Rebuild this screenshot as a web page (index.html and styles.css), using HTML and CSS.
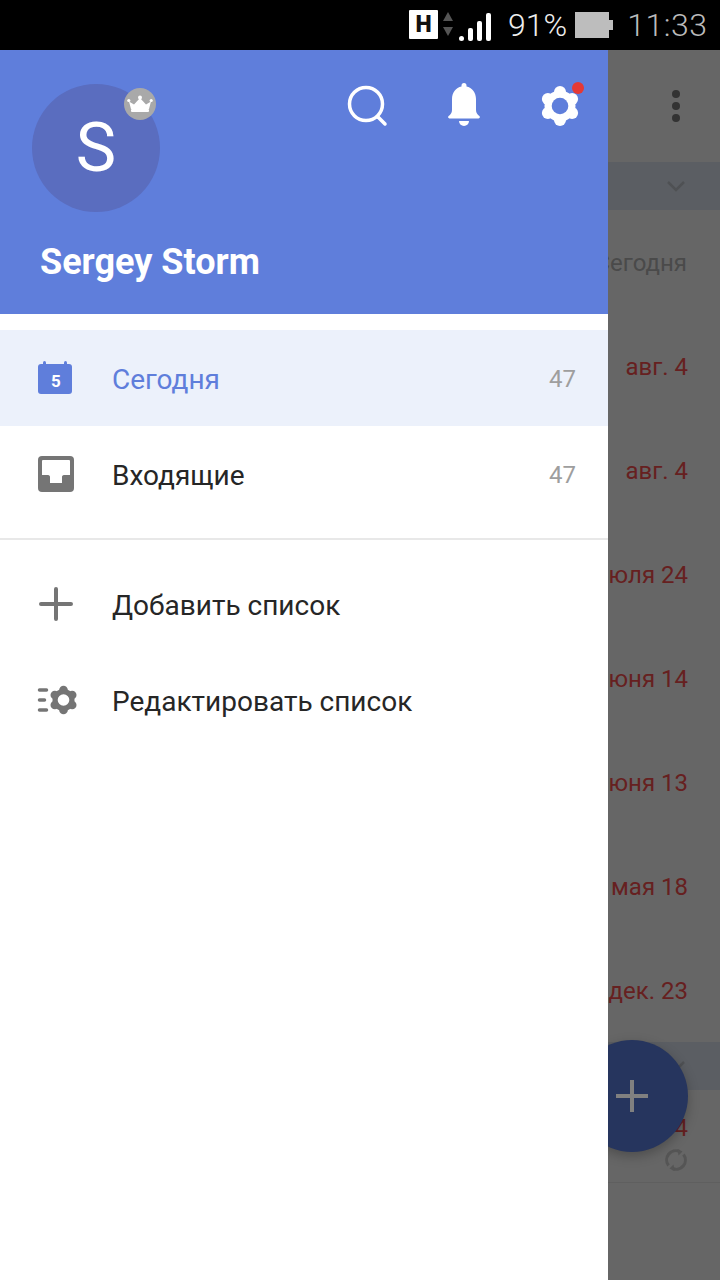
FILE: index.html
```html
<!DOCTYPE html>
<html lang="ru">

<head>
    <meta charset="UTF-8">
    <meta name="viewport" content="width=device-width, initial-scale=1.0">
    <title>Сегодня</title>
    <link rel="stylesheet" href="styles.css">
</head>

<body>
    <!-- Status bar -->
    <div class="status-bar">
        <span class="network-badge">H</span>
        <svg class="network-arrows" width="12" height="28" viewBox="0 0 12 28">
            <path d="M6 2l5 9H1z" fill="#555" />
            <path d="M6 26l5-9H1z" fill="#555" />
        </svg>
        <svg class="signal" width="34" height="30" viewBox="0 0 34 30">
            <rect x="1" y="24" width="5" height="5" rx="2.500" fill="#fff" />
            <rect x="10" y="16" width="5" height="13" rx="2" fill="#fff" />
            <rect x="19" y="9" width="5" height="20" rx="2" fill="#fff" />
            <rect x="28" y="1" width="5" height="28" rx="2" fill="#fff" />
        </svg>
        <span class="battery-text">91%</span>
        <span class="battery"></span>
        <span class="clock">11:33</span>
    </div>

    <div class="screen">
        <!-- Navigation drawer -->
        <div class="drawer">
            <div class="drawer-header">
                <div class="header-top">
                    <div class="avatar">
                        S
                        <span class="crown-badge">
                            <svg width="26" height="18" viewBox="0 0 26 18">
                                <path d="M2 6.500l5 3L13 3l6 6.500 5-3L22 14H4z" fill="#fff" />
                                <circle cx="13" cy="2.500" r="2" fill="#fff" />
                                <circle cx="1.800" cy="5.500" r="1.600" fill="#fff" />
                                <circle cx="24.200" cy="5.500" r="1.600" fill="#fff" />
                                <rect x="4" y="14" width="18" height="3" rx="1" fill="#fff" />
                            </svg>
                        </span>
                    </div>
                    <div class="header-icons">
                        <svg class="header-icon" width="48" height="48" viewBox="0 0 48 48">
                            <circle cx="22" cy="23" r="16.500" fill="none" stroke="#fff" stroke-width="3.500" />
                            <path d="M34 36l7 7" stroke="#fff" stroke-width="3.500" stroke-linecap="round" />
                        </svg>
                        <svg class="header-icon" width="48" height="48" viewBox="0 0 48 48">
                            <path d="M24 2a2.500 2.500 0 0 1 2.500 2.500v.9C32 6.600 36 11.600 36 18v11c0 3 1.500 4.600 3.400 6 .9.700.6 2.400-.8 2.400H9.400c-1.400 0-1.700-1.700-.8-2.400C10.500 33.600 12 32 12 29V18c0-6.400 4-11.400 9.500-12.600v-.9A2.500 2.500 0 0 1 24 2z" fill="#fff" />
                            <path d="M19 40h10a5 5 0 0 1-10 0z" fill="#fff" />
                        </svg>
                        <div class="settings">
                            <svg class="header-icon" width="48" height="48" viewBox="0 0 48 48">
                                <g fill="#fff">
                                    <circle cx="24" cy="25" r="15.500" />
                                    <circle cx="24" cy="11" r="6" />
                                    <circle cx="24" cy="39" r="6" />
                                    <circle cx="11.900" cy="18" r="6" />
                                    <circle cx="36.100" cy="18" r="6" />
                                    <circle cx="11.900" cy="32" r="6" />
                                    <circle cx="36.100" cy="32" r="6" />
                                </g>
                                <circle cx="24" cy="25" r="8.300" fill="#5f7edb" />
                            </svg>
                            <span class="red-dot"></span>
                        </div>
                    </div>
                </div>
                <div class="user-name">Sergey Storm</div>
            </div>

            <div class="drawer-list">
                <div class="drawer-row counted active">
                    <svg class="row-icon" width="48" height="48" viewBox="0 0 48 48">
                        <rect x="6" y="10" width="34" height="30" rx="3" fill="#5f7edb" />
                        <rect x="11" y="7" width="3" height="6" rx="1.500" fill="#5f7edb" />
                        <rect x="32" y="7" width="3" height="6" rx="1.500" fill="#5f7edb" />
                        <text x="24" y="33" class="calendar-day">5</text>
                    </svg>
                    <span class="row-title">Сегодня</span>
                    <span class="row-count">47</span>
                </div>
                <div class="drawer-row counted">
                    <svg class="row-icon" width="48" height="48" viewBox="0 0 48 48">
                        <rect x="6" y="6" width="36" height="36" rx="4" fill="#757575" />
                        <path d="M11 10h26a1 1 0 0 1 1 1v14h-6c-1.500 0-2 1-2 2v6H18v-6c0-1-.5-2-2-2h-6V11a1 1 0 0 1 1-1z" fill="#fff" />
                    </svg>
                    <span class="row-title">Входящие</span>
                    <span class="row-count">47</span>
                </div>
                <div class="divider"></div>
                <div class="drawer-row">
                    <svg class="row-icon" width="48" height="48" viewBox="0 0 48 48">
                        <path d="M24 8v30M9 23h30" stroke="#757575" stroke-width="4" stroke-linecap="round" />
                    </svg>
                    <span class="row-title">Добавить список</span>
                </div>
                <div class="drawer-row">
                    <svg class="row-icon" width="48" height="48" viewBox="0 0 48 48">
                        <g fill="#757575">
                            <circle cx="31.500" cy="23" r="11" />
                            <circle cx="31.500" cy="13" r="4.300" />
                            <circle cx="31.500" cy="33" r="4.300" />
                            <circle cx="22.800" cy="18" r="4.300" />
                            <circle cx="40.200" cy="18" r="4.300" />
                            <circle cx="22.800" cy="28" r="4.300" />
                            <circle cx="40.200" cy="28" r="4.300" />
                        </g>
                        <circle cx="31.500" cy="23" r="5.800" fill="#fff" />
                        <path d="M7.500 13h7M7.500 23h5M7.500 33h7" stroke="#757575" stroke-width="3.500" stroke-linecap="round" />
                    </svg>
                    <span class="row-title">Редактировать список</span>
                </div>
            </div>
        </div>

        <!-- Dimmed list behind the drawer -->
        <div class="backdrop">
            <div class="toolbar">
                <span class="dots"><i></i><i></i><i></i></span>
            </div>
            <div class="group-head">
                <svg width="20" height="12" viewBox="0 0 20 12">
                    <path d="M2 2l8 8 8-8" fill="none" stroke="#4f5154" stroke-width="2.500" />
                </svg>
            </div>
            <div class="date-row today">Сегодня</div>
            <div class="date-row">авг. 4</div>
            <div class="date-row">авг. 4</div>
            <div class="date-row">4 июля 24</div>
            <div class="date-row">4 июня 14</div>
            <div class="date-row">4 июня 13</div>
            <div class="date-row">мая 18</div>
            <div class="date-row">дек. 23</div>
            <div class="group-head second">
                <svg width="20" height="12" viewBox="0 0 20 12">
                    <path d="M2 2l8 8 8-8" fill="none" stroke="#4f5154" stroke-width="2.500" />
                </svg>
            </div>
            <div class="last-row">
                <span class="last-date">авг. 4</span>
                <svg width="24" height="24" viewBox="0 0 24 24" class="sync-icon">
                    <path d="M4.500 17.500A9.200 9.200 0 0 1 15.500 3.500M19.500 6.500A9.200 9.200 0 0 1 8.500 20.500" fill="none" stroke="#555" stroke-width="3" />
                    <path d="M13.500 1l5 2.500-4 4zM10.500 23l-5-2.500 4-4z" fill="#555" />
                </svg>
            </div>
            <div class="fab"><span class="fab-plus"></span></div>
        </div>
    </div>
</body>

</html>
```
FILE: styles.css
```css
* {
    box-sizing: border-box;
}

html,
body {
    margin: 0;
    width: 720px;
    height: 1280px;
    overflow: hidden;
    font-family: Roboto, "Noto Sans", sans-serif;
}

/* status bar */
.status-bar {
    height: 50px;
    background-color: #000;
    display: flex;
    align-items: center;
    padding-left: 409px;
}

.network-badge {
    width: 29px;
    height: 29px;
    margin-top: -1px;
    background-color: #fff;
    border-radius: 1px;
    color: #111;
    font-size: 23px;
    font-weight: 900;
    line-height: 29px;
    text-align: center;
}

.network-arrows {
    margin-left: 4px;
    margin-top: -2px;
}

.signal {
    margin-left: 4px;
    margin-top: 4px;
}

.battery-text {
    margin-left: 16px;
    color: #eee;
    font-size: 32px;
    font-weight: 300;
}

.battery {
    width: 34px;
    height: 26px;
    margin-left: 8px;
    background-color: #bdbdbd;
    position: relative;
}

.battery::after {
    content: "";
    position: absolute;
    left: 34px;
    top: 8px;
    width: 4px;
    height: 10px;
    background-color: #bdbdbd;
}

.clock {
    margin-left: 18px;
    color: #bbb;
    font-size: 32px;
    font-weight: 300;
    letter-spacing: 0.5px;
}

.screen {
    display: flex;
    height: 1230px;
}

/* drawer */
.drawer {
    width: 608px;
    flex-shrink: 0;
    background-color: #fff;
    position: relative;
    z-index: 2;
}

.drawer-header {
    height: 264px;
    background-color: #5f7edb;
    padding: 34px 24px 0 32px;
}

.header-top {
    display: flex;
    justify-content: space-between;
}

.avatar {
    width: 128px;
    height: 128px;
    border-radius: 50%;
    background-color: #5a6dbf;
    color: #fff;
    font-size: 68px;
    font-weight: 400;
    line-height: 128px;
    text-align: center;
    position: relative;
}

.crown-badge {
    position: absolute;
    left: 92px;
    top: 4px;
    width: 32px;
    height: 32px;
    border-radius: 50%;
    background-color: #a9a9a9;
    display: flex;
    align-items: center;
    justify-content: center;
}

.header-icons {
    display: flex;
    gap: 48px;
    margin-top: -3px;
}

.header-icon {
    display: block;
}

.settings {
    position: relative;
}

.red-dot {
    position: absolute;
    left: 36px;
    top: 1px;
    width: 12px;
    height: 12px;
    border-radius: 50%;
    background-color: #e53935;
}

.user-name {
    margin-top: 26px;
    margin-left: 8px;
    color: #fff;
    font-size: 36px;
    font-weight: 700;
    line-height: 48px;
}

.drawer-list {
    padding-top: 16px;
}

.drawer-row {
    height: 96px;
    display: flex;
    align-items: center;
    padding: 0 32px;
    color: #262626;
    font-size: 28px;
}

.drawer-row.active {
    background-color: #ecf1fb;
    color: #5f7edb;
}

.row-icon {
    flex-shrink: 0;
    margin-right: 32px;
}

.row-title {
    flex: 1;
}

.counted .row-title,
.counted .row-count {
    margin-top: 2px;
}

.row-count {
    color: #9e9e9e;
    font-size: 24px;
}

.calendar-day {
    fill: #fff;
    font-size: 17px;
    font-weight: 700;
    text-anchor: middle;
}

.divider {
    height: 2px;
    margin: 16px 0 17px;
    background-color: #e8e8e8;
}

/* list behind the drawer */
.backdrop {
    flex: 1;
    min-width: 0;
    background-color: #666;
    position: relative;
}

.toolbar {
    height: 112px;
    display: flex;
    justify-content: flex-end;
    align-items: center;
    padding: 0 40px 0 0;
}

.dots {
    display: flex;
    flex-direction: column;
    gap: 4px;
}

.dots i {
    width: 8px;
    height: 8px;
    border-radius: 50%;
    background-color: #333;
}

.group-head {
    height: 48px;
    background-color: #5b5e63;
    display: flex;
    justify-content: flex-end;
    align-items: center;
    padding-right: 34px;
    margin-bottom: 1px;
}

.group-head.second {
    margin-bottom: 0;
    margin-top: -1px;
}

.date-row {
    height: 104px;
    display: flex;
    justify-content: flex-end;
    align-items: center;
    padding-right: 32px;
    white-space: nowrap;
    color: #662020;
    font-size: 24px;
}

.date-row.today {
    color: #4a4a4a;
    padding-right: 33px;
}

.last-row {
    height: 93px;
    border-bottom: 1px solid #5f5f5f;
    display: flex;
    flex-direction: column;
    align-items: flex-end;
    padding: 22px 32px 0 0;
    color: #662020;
    font-size: 24px;
    line-height: 32px;
    white-space: nowrap;
}

.last-date {
    display: block;
}

.sync-icon {
    margin-top: 4px;
}

.fab {
    position: absolute;
    left: -32px;
    top: 990px;
    width: 112px;
    height: 112px;
    border-radius: 50%;
    background-color: #26355e;
    box-shadow: 0 4px 12px rgba(0, 0, 0, 0.25);
}

.fab-plus {
    position: absolute;
    left: 40px;
    top: 40px;
    width: 32px;
    height: 32px;
    background:
        linear-gradient(#808080, #808080) center / 32px 4px no-repeat,
        linear-gradient(#808080, #808080) center / 4px 32px no-repeat;
}
```
